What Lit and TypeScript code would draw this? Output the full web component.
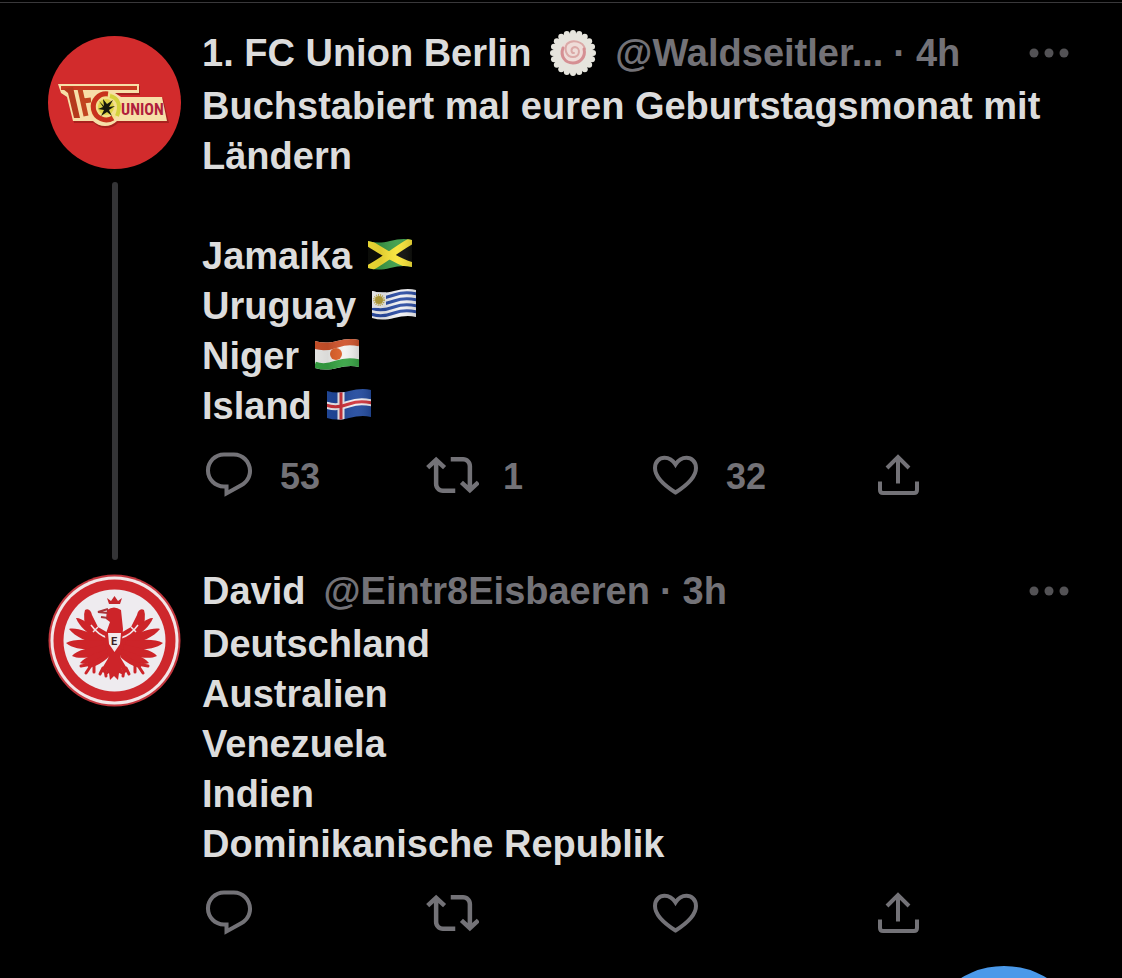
import { LitElement, html, svg, css, nothing, TemplateResult } from "lit";
import { customElement, property } from "lit/decorators.js";

/* ---------- waving flags ---------- */

const wave = (y: number) => `M0 ${y + 3} C8 ${y + 6} 15 ${y + 5} 23 ${y + 2} S38 ${y - 1} 46 ${y + 1}`;
const outline = "M1 4 C8 6 15 6 23 4 S38 1 45 3 V30 C38 28 31 29 23 31 S8 33 1 31 Z";

const flag = (id: string, label: string, art: TemplateResult) => html`
  <svg class="flag" viewBox="0 0 46 34" role="img" aria-label=${label}>
    <defs>
      <clipPath id=${id}><path d=${outline} /></clipPath>
      <linearGradient id="${id}-shade" x1="0" x2="1" y1="0" y2="0">
        <stop offset="0" stop-color="#000" stop-opacity="0.06" />
        <stop offset="0.3" stop-color="#000" stop-opacity="0.1" />
        <stop offset="0.65" stop-color="#fff" stop-opacity="0.06" />
        <stop offset="1" stop-color="#000" stop-opacity="0.15" />
      </linearGradient>
    </defs>
    <g clip-path="url(#${id})">
      ${art}
      <rect width="46" height="34" fill="url(#${id}-shade)" />
    </g>
  </svg>`;

const jamaica = flag("jm", "Jamaika", svg`
  <rect width="46" height="34" fill="#3c9c48" />
  <path d="M0 4 L22 18 L0 32 Z M46 2 L25 17 L46 30 Z" fill="#0c0d09" />
  <path d="M0 5 C12 12 28 24 46 29 M0 32 C14 26 26 14 46 3" fill="none" stroke="#f8e336" stroke-width="7" />`);

const uruguay = flag("uy", "Uruguay", svg`
  <rect width="46" height="34" fill="#f1f1f4" />
  ${[6, 12, 18, 24].map((y) => svg`<path d=${wave(y)} fill="none" stroke="#2c4da4" stroke-width="3" />`)}
  <path d="M0 0 H15 V20 L0 21 Z" fill="#f1f1f4" />
  <circle cx="8" cy="13" r="4" fill="#b9a23c" />
  <circle cx="8" cy="13" r="5" fill="none" stroke="#c9b555" stroke-width="2" stroke-dasharray="1 1" />`);

const niger = flag("ne", "Niger", svg`
  <rect width="46" height="34" fill="#f2f2f0" />
  <path d=${wave(3)} fill="none" stroke="#cf532b" stroke-width="11" />
  <path d=${wave(27)} fill="none" stroke="#36a343" stroke-width="11" />
  <circle cx="22" cy="17" r="6" fill="#de5f27" />`);

const iceland = flag("is", "Island", svg`
  <rect width="46" height="34" fill="#224a9e" />
  <path d="M15 0 V34" stroke="#f0eef2" stroke-width="7" />
  <path d=${wave(15)} fill="none" stroke="#f0eef2" stroke-width="7" />
  <path d="M15 0 V34" stroke="#d0343c" stroke-width="3" />
  <path d=${wave(15)} fill="none" stroke="#d0343c" stroke-width="3" />`);

const fishCake = html`
  <svg class="cake" viewBox="0 0 48 48" role="img" aria-label="Narutomaki">
    ${Array.from({ length: 20 }, (_, i) => {
      const a = (i * Math.PI) / 10;
      return svg`<circle cx=${24 + 20 * Math.cos(a)} cy=${24 + 20 * Math.sin(a)} r="3" fill="#e6e5dd" />`;
    })}
    <circle cx="24" cy="24" r="20" fill="#e6e4dd" />
    <circle cx="24" cy="23" r="12" fill="#efdcd8" />
    <path d="M25 24 C22 24 21 19 26 18 C32 19 31 28 24 28 C17 28 15 20 18 15 C23 10 34 12 36 20"
      fill="none" stroke="#dba9a7" stroke-width="2" stroke-linecap="round" />
    <path d="M14 19 C11 27 16 34 24 34 C31 34 37 28 35 20" fill="none" stroke="#d58f93" stroke-width="3" stroke-linecap="round" />
  </svg>`;

/* ---------- club crests ---------- */

const unionCrest = html`
  <svg class="avatar" viewBox="0 0 133 133" role="img" aria-label="1. FC Union Berlin">
    <circle cx="66.5" cy="66.5" r="66.5" fill="#d22b2c" />
    <path d="M12 50 H92 V59 H68 L74 62 H115 L121 87 H70 A17 17 0 0 1 46 87 H26 L20 62 L14 58 Z" fill="#8c1a16" opacity="0.6" />
    <path d="M10 48 H91 V57 H67 L73 61 H114 L119 85 H69 A17 17 0 0 1 45 85 H25 L19 61 L13 57 Z" fill="#f7dfa8" />
    <path d="M13 50 H89 V54 H13 Z" fill="#c93a22" />
    <path d="M15 53 L20 57 L26 82 H32 L25 51 Z" fill="#b5391d" />
    <path d="M32 53 L38 80 M35 65 L43 64" stroke="#c14420" stroke-width="5" fill="none" />
    <circle cx="57" cy="71" r="15" fill="#f4e08d" />
    <path d="M60 58 A13 13 0 1 0 65 82" fill="none" stroke="#c8321d" stroke-width="5" />
    <path d="M62 60 C71 62 73 70 69 80" fill="none" stroke="#d4d23c" stroke-width="4" />
    <circle cx="58" cy="71" r="8" fill="#e0d44a" />
    <path d="M51 65 L56 70 L55 63 L59 68 L65 64 L61 71 L67 70 L61 74 L64 80 L59 76 L53 80 L56 74 L50 73 L55 71 Z" fill="#17180c" />
    <text x="73" y="79" class="wordmark">UNION</text>
  </svg>`;

const wing = svg`
  <g fill="#cd2429">
    <path d="M37 36 C40 34 43 36 44 41 L50 53 L62 60 V82 L50 76 L40 58 Q34 44 37 36 Z" />
    <path d="M28 44 C32 43 42 50 52 60 L50 66 C40 60 31 52 28 44 Z" />
    <path d="M21 55 C28 53 42 59 54 64 L52 71 C40 68 27 63 21 55 Z" />
    <path d="M18 69 C26 64 42 66 56 67 L54 75 C42 76 26 76 18 69 Z" />
    <path d="M24 82 C28 76 42 74 58 70 L57 78 C46 83 32 86 24 82 Z" />
    <path d="M32 89 C37 83 48 79 60 75 V81 C50 88 40 92 32 89 Z" />
  </g>
  <g stroke="#cd2429" stroke-linecap="round" stroke-width="3" fill="none">
    <path d="M58 82 Q50 89 42 91" stroke-width="5" />
    <path d="M62 86 L56 96" stroke-width="5" />
    <path d="M44 90 L33 92 M44 90 L38 99 M46 90 L46 98 M55 94 L52 100 M57 95 L58 102" />
  </g>
  <path d="M43 51 Q50 61 60 64 M45 58 L50 53" fill="none" stroke="#f1e5e8" stroke-width="1.5" />`;

const eagleCrest = html`
  <svg class="avatar" viewBox="0 0 133 133" role="img" aria-label="Eintracht Frankfurt">
    <circle cx="66.5" cy="66.5" r="66" fill="#c4373e" />
    <circle cx="66.5" cy="66.5" r="64" fill="#f3e6e8" />
    <circle cx="66.5" cy="66.5" r="61" fill="#ce272c" />
    <circle cx="66.5" cy="66.5" r="51" fill="#eeebef" />
    ${wing}
    <g transform="translate(133 0) scale(-1 1)">${wing}</g>
    <path d="M59 36 Q66 31 73 36 L75 55 L72 90 L76 101 L71 99 L70 106 L66 102 L62 106 L61 99 L57 102 L61 88 L57 62 L62 48 L58 45 Z" fill="#cd2429" />
    <path d="M60 35 L50 38 L60 39 M60 44 L53 43" fill="none" stroke="#a9343a" stroke-width="2" />
    <path d="M59 24 L63 27 L66.5 22 L70 27 L74 24 L72 30 H61 Z" fill="#c5262c" />
    <path d="M60 59 H73 L72 70 L66.5 78 L61 70 Z" fill="#f1e9eb" />
    <text x="63" y="71" class="shield">E</text>
  </svg>`;

/* ---------- action icons ---------- */

const icons = {
  reply: svg`<path fill="currentColor" transform="scale(2.25)" d="M1.751 10c0-4.42 3.584-8 8.005-8h4.366c4.49 0 8.129 3.64 8.129 8.13 0 2.96-1.607 5.68-4.196 7.11l-8.054 4.46v-3.69h-.067c-4.49.1-8.183-3.51-8.183-8.01zm8.005-6.2c-3.4 0-6.2 2.78-6.2 6.2 0 3.47 2.85 6.28 6.33 6.2l.351-.01h1.561v2.5l5.38-2.98c2-1.11 3.263-3.22 3.263-5.58 0-3.5-2.83-6.33-6.319-6.33H9.756z" />`,
  repost: svg`<path fill="currentColor" transform="translate(1 0) scale(2.25)" d="M4.5 3.88l4.432 4.14-1.364 1.46L5.5 7.55V16c0 1.1.896 2 2 2H13v2H7.5c-2.209 0-4-1.79-4-4V7.55L1.432 9.48.068 8.02 4.5 3.88zM16.5 6H11V4h5.5c2.209 0 4 1.79 4 4v8.45l2.068-1.93 1.364 1.46-4.432 4.14-4.432-4.14 1.364-1.46 2.068 1.93V8c0-1.1-.896-2-2-2z" />`,
  like: svg`<path class="line" d="M27.5 44.5 C14 36 7 28 7 20 C7 13.5 11.5 9.8 16.5 9.8 C21 9.8 25 12.5 27.5 16.5 C30 12.5 34 9.8 38.5 9.8 C43.5 9.8 48 13.5 48 20 C48 28 41 36 27.5 44.5 Z" />`,
  share: svg`<path class="line" d="M27 35.5 V9 M16 20 L27 9 L38 20 M9 33.5 V42 Q9 45 12 45 H43 Q46 45 46 42 V33.5" />`,
};

@customElement("tweet-post")
class TweetPost extends LitElement {
  @property() name = "";
  @property() handle = "";
  @property() age = "";
  @property({ attribute: false }) badge: unknown = nothing;
  @property({ attribute: false }) avatar: unknown = nothing;
  @property({ attribute: false }) text: unknown = nothing;
  @property({ type: Number }) replies = 0;
  @property({ type: Number }) reposts = 0;
  @property({ type: Number }) likes = 0;
  @property({ type: Boolean }) threaded = false;

  static styles = css`
    :host { display: block; }
    .post {
      display: grid;
      grid-template-columns: 133px minmax(0, 1fr);
      column-gap: 21px;
      padding: 0 28px 0 48px;
    }
    .rail { display: flex; flex-direction: column; align-items: center; padding: 8px 0 6px; gap: 13px; }
    .avatar { display: block; width: 133px; height: 133px; flex: none; }
    .thread { flex: 1; width: 6px; border-radius: 3px; background: #343436; }
    .wordmark { font: 700 16px "Roboto Condensed", Roboto, sans-serif; fill: #b01e3c; }
    .shield { font: 700 11px Roboto, sans-serif; fill: #3c2226; }
    .content { padding-bottom: 64px; }
    header { display: flex; align-items: center; height: 50px; margin-bottom: 3px; padding-right: 25px; white-space: nowrap; }
    .name { margin: 0; font-size: 38px; font-weight: 700; line-height: 50px; color: #dcdcdc; }
    .meta { display: flex; gap: 10px; margin-left: 18px; line-height: 50px; color: #737277; }
    .cake { display: block; width: 48px; height: 48px; margin-left: 18px; }
    .more { margin-left: auto; color: #535255; }
    .more svg { display: block; width: 40px; height: 10px; }
    .text { margin: 0; line-height: 50px; color: #dcdcdc; }
    .flag { width: 46px; height: 34px; margin-left: 4px; vertical-align: -2px; }
    .actions { display: grid; grid-template-columns: repeat(4, 1fr); margin-top: 17px; color: #737277; }
    .actions svg { display: block; width: 54px; height: 54px; }
    .line { fill: none; stroke: currentColor; stroke-width: 4; }
    button {
      display: flex; align-items: center; gap: 24px; padding: 0; border: 0;
      background: none; color: inherit; font: inherit; font-size: 36px; line-height: 50px; cursor: pointer;
    }
    .count { padding-top: 3px; }
  `;

  private action(label: string, icon: unknown, count = 0) {
    return html`<button aria-label=${label}>
      <svg viewBox="0 0 54 54" aria-hidden="true">${icon}</svg>${count ? html`<span class="count">${count}</span>` : nothing}
    </button>`;
  }

  render() {
    return html`
      <article class="post">
        <div class="rail">${this.avatar}${this.threaded ? html`<div class="thread"></div>` : nothing}</div>
        <div class="content">
          <header>
            <h2 class="name">${this.name}</h2>
            ${this.badge}
            <div class="meta"><span>${this.handle}</span><span>·</span><span>${this.age}</span></div>
            <button class="more" aria-label="Mehr">
              <svg viewBox="0 0 40 10" fill="currentColor" aria-hidden="true">
                <circle cx="5" cy="5" r="4.5" /><circle cx="20" cy="5" r="4.5" /><circle cx="35" cy="5" r="4.5" />
              </svg>
            </button>
          </header>
          <p class="text">${this.text}</p>
          <div class="actions">
            ${this.action("Antworten", icons.reply, this.replies)}
            ${this.action("Retweeten", icons.repost, this.reposts)}
            ${this.action("Gefällt mir", icons.like, this.likes)}
            ${this.action("Teilen", icons.share)}
          </div>
        </div>
      </article>`;
  }
}

@customElement("app-root")
class AppRoot extends LitElement {
  static styles = css`
    :host {
      display: block;
      min-height: 100vh;
      box-sizing: border-box;
      padding-top: 2px;
      background: #000;
      font: 700 38px "Liberation Sans", Arial, sans-serif;
    }
    main { border-top: 1px solid #39383a; padding-top: 25px; }
    .compose {
      position: fixed;
      right: 34px;
      bottom: -156px;
      width: 168px;
      height: 168px;
      border: 0;
      border-radius: 50%;
      background: #4a99e9;
    }
  `;

  render() {
    return html`
      <main>
        <tweet-post
          name="1. FC Union Berlin" handle="@Waldseitler..." age="4h" threaded
          .badge=${fishCake} .avatar=${unionCrest}
          .replies=${53} .reposts=${1} .likes=${32}
          .text=${html`Buchstabiert mal euren Geburtstagsmonat mit Ländern<br /><br />Jamaika ${jamaica}<br />Uruguay ${uruguay}<br />Niger ${niger}<br />Island ${iceland}`}
        ></tweet-post>
        <tweet-post
          name="David" handle="@Eintr8Eisbaeren" age="3h" .avatar=${eagleCrest}
          .text=${html`Deutschland<br />Australien<br />Venezuela<br />Indien<br />Dominikanische Republik`}
        ></tweet-post>
      </main>
      <button class="compose" aria-label="Tweet verfassen"></button>`;
  }
}
